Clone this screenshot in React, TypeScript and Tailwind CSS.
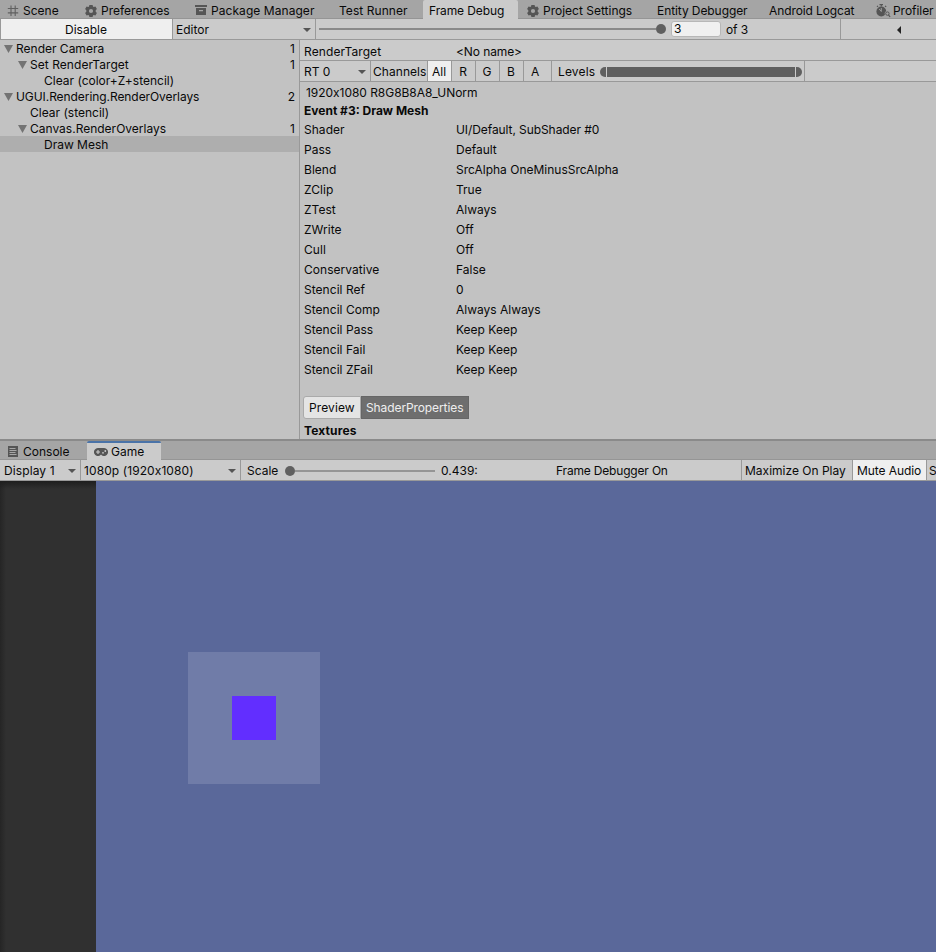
import type { ReactNode } from "react";

function GridIcon() {
  return (
    <svg className="block size-3" viewBox="0 0 12 12" fill="none" stroke="#606060" strokeWidth="1.100">
      <path d="M4 .500v10.500M8.200.500v10.500M.800 3.500h10.400M.800 7.900h10.400" />
    </svg>
  );
}

function GearIcon() {
  return (
    <svg className="block size-3" viewBox="0 0 12 12">
      <path
        fill="#555"
        fillRule="evenodd"
        d="M4.400 0h3.200l.4 1.500.7.400 1.700-.500 1.500 2.600L10.700 5.200v1.600l1.200 1.200-1.500 2.600-1.700-.500-.700.400-.400 1.500H4.400L4 10.500l-.700-.400-1.700.500L.100 8l1.200-1.200V5.200L.100 4l1.500-2.600 1.700.500.700-.400zM6 3.900a2.100 2.100 0 1 0 0 4.200 2.100 2.100 0 0 0 0-4.200z"
      />
    </svg>
  );
}

function PackageIcon() {
  return (
    <svg className="block size-3" viewBox="0 0 12 12" fill="#555">
      <path d="M0 0h12v2H0z" />
      <path fillRule="evenodd" d="M1 3h10v7H1zM4 5v1.200h4V5z" />
    </svg>
  );
}

function ProfilerIcon() {
  return (
    <svg className="block h-[14px] w-[15px] shrink-0" viewBox="0 0 15 14" fill="none">
      <path d="M3.500.600h3.500M5.300.600v2M1 2.800l1-.900M9 1.900l1.200.900" stroke="#555" strokeWidth="1.200" />
      <circle cx="5.300" cy="7.500" r="4.900" fill="#555" />
      <path d="M5.300 7.500L3.200 5M5.300 4v3.500" stroke="#a5a5a5" strokeWidth=".9" />
      <circle cx="11.400" cy="9.600" r="2.700" fill="#a5a5a5" />
      <circle cx="11.400" cy="9.600" r="1.700" stroke="#555" />
      <path d="M12.500 10.800l1.600 2.200" stroke="#555" strokeWidth="1.200" />
    </svg>
  );
}

function ConsoleIcon() {
  return (
    <svg className="block h-3 w-[10px]" viewBox="0 0 10 12">
      <path d="M0 0h10v11H0z" fill="#555" />
      <path d="M1.500 2.500h6M1.500 4.500h7M1.500 6.500h6M1.500 8.500h7" stroke="#b0b0b0" strokeWidth=".9" />
    </svg>
  );
}

function GamepadIcon() {
  return (
    <svg className="block h-2 w-[14px]" viewBox="0 0 14 8">
      <path d="M4 0h6a4 4 0 1 1-2.600 7L7 6.500 6.600 7A4 4 0 1 1 4 0z" fill="#555" />
      <path d="M2 4h4M4 2v4" stroke="#ccc" strokeWidth="1.100" />
      <circle cx="9" cy="4.800" r=".9" fill="#ccc" />
      <circle cx="11.300" cy="3" r=".9" fill="#ccc" />
    </svg>
  );
}

function DropArrow() {
  return (
    <svg className="block h-1 w-2 shrink-0" viewBox="0 0 8 4">
      <path d="M0 0h8L4 4z" fill="#555" />
    </svg>
  );
}

type TabProps = { width: string; icon?: ReactNode; label: string; active?: boolean };

function Tab({ width, icon, label, active }: TabProps) {
  return (
    <div
      className={`flex h-full shrink-0 items-center ${width} ${active ? "bg-[#cbcbcb] pt-[2px]" : "border-b border-[#959595] pt-[3px]"}`}
    >
      {icon}
      <span>{label}</span>
    </div>
  );
}

const tree = [
  { label: "Render Camera", indent: "pl-[4px]", open: true, count: "1" },
  { label: "Set RenderTarget", indent: "pl-[18px] tracking-[0.05px]", open: true, count: "1" },
  { label: "Clear (color+Z+stencil)", indent: "pl-[44px]" },
  { label: "UGUI.Rendering.RenderOverlays", indent: "pl-[4px] tracking-[-0.07px]", open: true, count: "2" },
  { label: "Clear (stencil)", indent: "pl-[30px]" },
  { label: "Canvas.RenderOverlays", indent: "pl-[18px]", open: true, count: "1" },
  { label: "Draw Mesh", indent: "pl-[44px]", selected: true },
];

const state = [
  ["Shader", "UI/Default, SubShader #0"],
  ["Pass", "Default"],
  ["Blend", "SrcAlpha OneMinusSrcAlpha"],
  ["ZClip", "True"],
  ["ZTest", "Always"],
  ["ZWrite", "Off"],
  ["Cull", "Off"],
  ["Conservative", "False"],
  ["Stencil Ref", "0"],
  ["Stencil Comp", "Always Always"],
  ["Stencil Pass", "Keep Keep"],
  ["Stencil Fail", "Keep Keep"],
  ["Stencil ZFail", "Keep Keep"],
];

export default function App() {
  return (
    <div className="flex h-[952px] w-[936px] flex-col overflow-hidden bg-[#c2c2c2] font-['Inter','Liberation_Sans',sans-serif] text-[12px] leading-4 tracking-[0px] whitespace-nowrap text-[#090909]">
      <div className="flex h-[19px] shrink-0 bg-[#a5a5a5]">
        <Tab width="w-[78px] pl-[7px] gap-[4px]" icon={<GridIcon />} label="Scene" />
        <Tab width="w-[110px] pl-[7px] gap-[4px]" icon={<GearIcon />} label="Preferences" />
        <Tab width="w-[144px] pl-[7px] gap-[4px] tracking-[0.06px]" icon={<PackageIcon />} label="Package Manager" />
        <Tab width="w-[91px] pl-[7px] tracking-[0.06px]" label="Test Runner" />
        <Tab width="w-[95px] pl-[6px] rounded-t-[2px] tracking-[-0.1px]" label="Frame Debug" active />
        <Tab width="w-[132px] pl-[9px] gap-[4px]" icon={<GearIcon />} label="Project Settings" />
        <Tab width="w-[112px] pl-[7px] tracking-[-0.08px]" label="Entity Debugger" />
        <Tab width="w-[107px] pl-[7px] tracking-[-0.1px]" label="Android Logcat" />
        <Tab width="w-[67px] pl-[7px] gap-[2px] tracking-[-0.05px]" icon={<ProfilerIcon />} label="Profiler" />
      </div>

      <div className="flex h-[21px] shrink-0 border-b border-[#999] bg-[#cbcbcb]">
        <div className="flex w-[173px] items-center justify-center border-x border-[#999] bg-[#efefef] pt-px pr-px">Disable</div>
        <div className="flex w-[143px] items-center justify-between border-r border-[#999] pt-px pr-1 pl-[3px]">
          Editor
          <DropArrow />
        </div>
        <div className="flex w-[525px] items-center border-r border-[#999] pl-[3px]">
          <div className="h-[2px] w-[337px] bg-[#8a8a8a]" />
          <div className="size-[10px] rounded-full bg-[#606060]" />
          <div className="ml-[5px] flex h-4 w-[50px] items-center rounded-[3px] border border-[#b7b7b7] bg-[#f0f0f0] pl-[2px]">3</div>
          <span className="ml-[5px] pt-px tracking-[-0.1px]">of 3</span>
        </div>
        <div className="flex items-center pt-px pl-[56px]">
          <svg className="block h-2 w-1" viewBox="0 0 4 8">
            <path d="M4 0v8L0 4z" fill="#222" />
          </svg>
        </div>
      </div>

      <div className="flex h-[399px] shrink-0">
        <div className="w-[300px] shrink-0 border-r border-[#999]">
          {tree.map((row) => (
            <div key={row.label} className={`flex h-4 items-center pr-[4px] pt-px ${row.indent} ${row.selected ? "bg-[#aeaeae]" : ""}`}>
              {row.open && (
                <svg className="mr-[3px] block h-[8px] w-[9px]" viewBox="0 0 9 8">
                  <path d="M0 0h9L4.500 8z" fill="#737373" />
                </svg>
              )}
              <span className="flex-1">{row.label}</span>
              <span>{row.count}</span>
            </div>
          ))}
        </div>

        <div className="flex flex-1 flex-col">
          <div className="flex h-[21px] shrink-0 items-center border-b border-[#999] bg-[#cbcbcb] pt-[3px] pl-1">
            <span className="w-[152px] tracking-[0.1px]">RenderTarget</span>
            <span className="tracking-[-0.1px]">&lt;No name&gt;</span>
          </div>
          <div className="flex h-[21px] shrink-0 border-b border-[#999] bg-[#cbcbcb] *:flex *:items-center *:border-r *:border-[#999] *:pt-px">
            <div className="w-[71px] justify-between pr-1 pl-1">
              RT 0
              <DropArrow />
            </div>
            <div className="w-[57px] pl-[2px] tracking-[0.05px]">Channels</div>
            <div className="w-[24px] justify-center bg-[#efefef] pr-px">All</div>
            <div className="w-[24px] justify-center pr-px">R</div>
            <div className="w-[24px] justify-center pr-px">G</div>
            <div className="w-[24px] justify-center pr-px">B</div>
            <div className="w-[28px] pl-[7px]">A</div>
            <div className="w-[253px] pl-[6px]">
              <span className="w-[42px] tracking-[0.15px]">Levels</span>
              <div className="flex h-[10px] gap-px">
                <div className="w-[6px] rounded-l-full bg-[#606060]" />
                <div className="w-[188px] bg-[#606060]" />
                <div className="w-[6px] rounded-r-full bg-[#606060]" />
              </div>
            </div>
          </div>
          <div className="mt-[2px] h-[18px] pl-[6px] leading-[18px] tracking-[-0.04px]">1920x1080 R8G8B8A8_UNorm</div>
          <div className="mb-px h-[17px] pl-1 leading-[18px] font-bold">Event #3: Draw Mesh</div>
          {state.map(([name, value]) => (
            <div key={name} className="flex h-5 items-center pl-1">
              <span className="w-[152px] tracking-[0.04px]">{name}</span>
              <span className={name === "Shader" ? "tracking-[-0.08px]" : ""}>{value}</span>
            </div>
          ))}
          <div className="mt-4 ml-[3px] flex h-[23px] shrink-0 leading-[22px]">
            <div className="w-[58px] rounded-l-[3px] border border-[#aaa] bg-[#e4e4e4] pl-[5px] tracking-[0.1px]">Preview</div>
            <div className="w-[108px] border border-[#666] bg-[#6e6e6e] pl-1 tracking-[-0.1px] text-[#eee]">ShaderProperties</div>
          </div>
          <div className="h-5 pl-1 leading-6 font-bold tracking-[0.15px]">Textures</div>
        </div>
      </div>

      <div className="flex h-[21px] shrink-0 border-t-2 border-[#8a8a8a] bg-[#a5a5a5]">
        <Tab width="w-[87px] pl-[8px] gap-[5px]" icon={<ConsoleIcon />} label="Console" />
        <div className="flex w-[74px] items-center gap-[3px] rounded-t-[2px] border-t-2 border-[#4a73a8] bg-[#cbcbcb] pl-[7px]">
          <GamepadIcon />
          <span>Game</span>
        </div>
        <div className="flex-1 border-b border-[#959595]" />
      </div>

      <div className="flex h-[21px] shrink-0 border-b border-[#999] bg-[#cbcbcb] *:flex *:shrink-0 *:items-center *:border-[#999] *:pt-px">
        <div className="w-[81px] justify-between border-r pr-1 pl-1">
          <span className="tracking-[0.1px]">Display 1</span>
          <DropArrow />
        </div>
        <div className="w-[160px] justify-between border-r pr-1 pl-[3px]">
          <span className="tracking-[0.09px]">1080p (1920x1080)</span>
          <DropArrow />
        </div>
        <div className="w-[315px] pl-[6px]">
          <span className="w-[38px]">Scale</span>
          <div className="size-[10px] rounded-full bg-[#606060]" />
          <div className="h-[2px] w-[140px] bg-[#959595]" />
          <span className="ml-[6px]">0.439:</span>
        </div>
        <div className="w-[186px] border-r tracking-[-0.18px]">Frame Debugger On</div>
        <div className="w-[111px] border-r pl-[3px]">Maximize On Play</div>
        <div className="w-[74px] border-r bg-[#efefef] pl-1 tracking-[-0.08px]">Mute Audio</div>
        <div className="w-[9px] pl-[2px]">S</div>
      </div>

      <div className="flex flex-1">
        <div className="w-24 bg-[linear-gradient(to_bottom,#1e1e1e,transparent_8px),linear-gradient(to_right,#252525,transparent_6px)] bg-[#303030]" />
        <div className="flex-1 bg-[#5a689a] pt-[171px] pl-[92px]">
          <div className="flex size-[132px] items-center justify-center bg-[#707ca8]">
            <div className="size-11 bg-[#622eff]" />
          </div>
        </div>
      </div>
    </div>
  );
}
